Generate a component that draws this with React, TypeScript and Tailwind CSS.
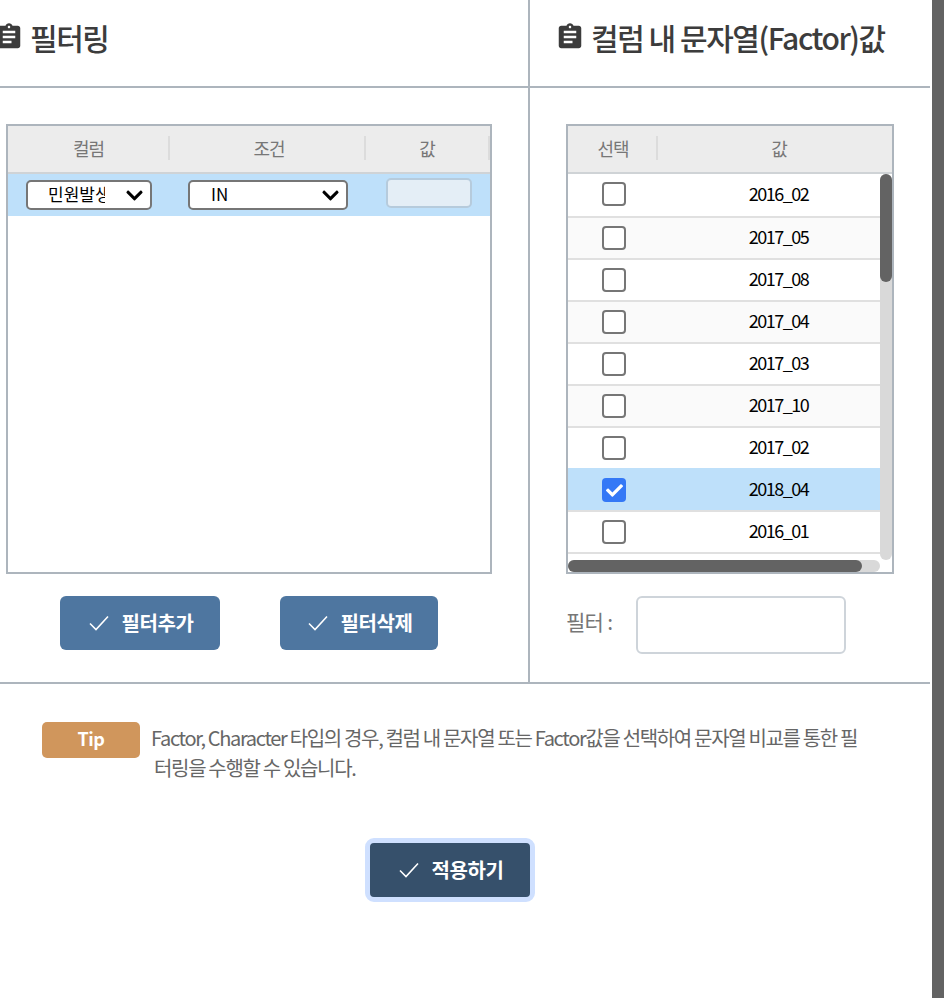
import { MdAssignment } from "react-icons/md";
import { FaCheck, FaChevronDown } from "react-icons/fa";

const rows = [
  "2016_02",
  "2017_05",
  "2017_08",
  "2017_04",
  "2017_03",
  "2017_10",
  "2017_02",
  "2018_04",
  "2016_01",
];

function Thin() {
  return (
    <svg width="20" height="16" viewBox="0 0 20 16" fill="none" stroke="currentColor" strokeWidth="1.6">
      <path d="M1 8.5l6 6L19 1.5" />
    </svg>
  );
}

function Title({ text, className }: { text: string; className: string }) {
  return (
    <h2 className={`box-content flex h-[74px] items-center border-b-2 border-[#adb5bd] pb-[12px] text-[30px] font-medium tracking-[-1.45px] text-[#3c3c3c] ${className}`}>
      <MdAssignment className="mr-[6px] shrink-0 text-[30px]" />
      {text}
    </h2>
  );
}

function Select({ label, width, pad }: { label: string; width: string; pad: string }) {
  return (
    <div className={`flex h-[30px] items-center justify-between rounded-[5px] border-2 border-[#767676] bg-white pr-[6px] text-[17px] leading-none text-black ${width} ${pad}`}>
      <span className="w-[57px] overflow-hidden whitespace-nowrap pb-[3px]">{label}</span>
      <FaChevronDown className="text-[19px]" />
    </div>
  );
}

function Action({ label, className }: { label: string; className: string }) {
  return (
    <button className={`flex h-[54px] items-center justify-center gap-[13px] rounded-[6px] pl-[2px] text-[20px] font-bold tracking-[-0.4px] text-white ${className}`}>
      <Thin />
      {label}
    </button>
  );
}

function Divider() {
  return <span className="h-[24px] w-[2px] shrink-0 bg-[#dcdcdc]" />;
}

export default function App() {
  return (
    <div className="flex h-[998px] w-[944px] overflow-hidden bg-white font-['Noto_Sans_CJK_KR',sans-serif]">
      <div className="w-[930px] shrink-0">
        <div className="flex h-[684px] border-b-2 border-[#adb5bd]">
          <section className="w-[530px] border-r-2 border-[#adb5bd]">
            <Title text="필터링" className="-ml-[6px]" />
            <div className="ml-[6px] mt-[36px] h-[450px] w-[486px] border-2 border-[#adb5bd]">
              <div className="flex h-[48px] items-center border-b-2 border-[#cfd3d6] bg-[#ececec] pb-[2px] text-[18px] tracking-[-1px] text-[#777]">
                <span className="w-[160px] pl-[1px] text-center">컬럼</span>
                <Divider />
                <span className="w-[194px] pl-[4px] text-center">조건</span>
                <Divider />
                <span className="w-[122px] text-center">값</span>
                <Divider />
              </div>
              <div className="flex h-[42px] items-start bg-[#bee0fa]">
                <div className="ml-[18px] mt-[6px]">
                  <Select label="민원발생일" width="w-[126px]" pad="pl-[20px]" />
                </div>
                <div className="ml-[36px] mt-[6px]">
                  <Select label="IN" width="w-[160px]" pad="pl-[21px]" />
                </div>
                <div className="ml-[38px] mt-[4px] h-[30px] w-[86px] rounded-[5px] border-2 border-[#b6cbdc] bg-[#e4eef6]" />
              </div>
            </div>
            <div className="mt-[22px] flex">
              <Action label="필터추가" className="ml-[60px] w-[160px] bg-[#4e76a0]" />
              <Action label="필터삭제" className="ml-[60px] w-[158px] bg-[#4e76a0]" />
            </div>
          </section>
          <section className="w-[400px]">
            <Title text="컬럼 내 문자열(Factor)값" className="pl-[25px]" />
            <div className="relative ml-[36px] mt-[36px] h-[450px] w-[328px] overflow-hidden border-2 border-[#adb5bd]">
              <div className="flex h-[48px] w-[332px] items-center border-b-2 border-[#cfd3d6] bg-[#ececec] pb-[2px] text-[18px] tracking-[-1px] text-[#777]">
                <span className="w-[88px] pl-[2px] text-center">선택</span>
                <Divider />
                <span className="flex-1 text-center">값</span>
              </div>
              {rows.map((value, i) => {
                const selected = value === "2018_04";
                return (
                  <div
                    key={value}
                    className={`flex h-[42px] w-[332px] items-center text-[18px] tracking-[-1.5px] text-black ${
                      i === 0 ? "pb-[2px]" : "border-t-2"
                    } ${selected ? "border-[#bee0fa] bg-[#bee0fa]" : "border-[#e0e0e0]"} ${
                      !selected && i % 2 ? "bg-[#fafafa]" : ""
                    }`}
                  >
                    <span className="flex w-[92px] justify-center">
                      {selected ? (
                        <span className="flex h-[24px] w-[24px] items-center justify-center rounded-[4px] bg-[#3478f6] text-[17px] text-white">
                          <FaCheck />
                        </span>
                      ) : (
                        <span className="h-[24px] w-[24px] rounded-[4px] border-2 border-[#767676] bg-white" />
                      )}
                    </span>
                    <span className={`flex-1 pr-[3px] text-center ${i === 0 ? "pb-[1px]" : "pb-[3px]"}`}>{value}</span>
                  </div>
                );
              })}
              <div className="w-[332px] border-t-2 border-[#e0e0e0]" />
              <div className="absolute right-0 top-[48px] h-[386px] w-[12px] rounded-[6px] bg-[#d9d9d9]">
                <div className="h-[108px] rounded-[6px] bg-[#636363]" />
              </div>
              <div className="absolute bottom-0 left-0 h-[12px] w-[312px] rounded-[6px] bg-[#d9d9d9]">
                <div className="h-full w-[294px] rounded-[6px] bg-[#636363]" />
              </div>
            </div>
            <div className="ml-[36px] mt-[22px] flex items-center gap-[24px]">
              <span className="pb-[6px] text-[21px] tracking-[-0.7px] text-[#777]">필터 :</span>
              <div className="h-[58px] w-[210px] rounded-[6px] border-2 border-[#ced4da] bg-white" />
            </div>
          </section>
        </div>

        <div className="ml-[42px] mt-[38px] flex items-start">
          <span className="flex h-[36px] w-[98px] items-center justify-center rounded-[5px] bg-[#d0965c] pb-[3px] text-[18px] font-bold tracking-[-0.5px] text-white">
            Tip
          </span>
          <p className="ml-[11px] w-[740px] whitespace-nowrap pt-[1px] text-[20px] leading-[30px] tracking-[-1.33px] text-[#666]">
            Factor, Character 타입의 경우, 컬럼 내 문자열 또는 Factor값을 선택하여 문자열 비교를 통한 필
            <br />
            <span className="ml-[3px]">터링을 수행할 수 있습니다.</span>
          </p>
        </div>

        <div className="mt-[55px] flex justify-center">
          <button className="ml-[-30px] flex h-[64px] w-[170px] items-center justify-center gap-[13px] rounded-[9px] border-[5px] border-[#cfe0ff] bg-[#36506b] pl-[2px] text-[20px] font-bold tracking-[-0.4px] text-white">
            <Thin />
            적용하기
          </button>
        </div>
      </div>
      <div className="ml-[2px] h-full w-[12px] bg-[#636363]" />
    </div>
  );
}
